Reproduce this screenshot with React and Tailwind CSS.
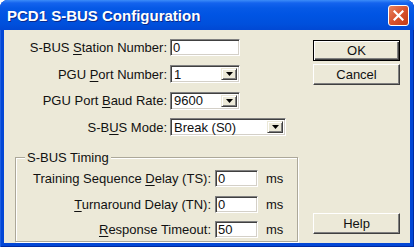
import React from "react";

const sunken =
  "bg-white border border-t-[#808080] border-l-[#808080] border-b-white border-r-white shadow-[inset_1px_1px_0_#404040,inset_-1px_-1px_0_#d4d0c8]";

function U({ children }) {
  return <span className="underline decoration-1 underline-offset-[2px]">{children}</span>;
}

function TextBox({ value, w }) {
  return (
    <div className={`${sunken} h-[17px] ${w} flex items-center pl-[2px] leading-none`}>
      {value}
    </div>
  );
}

function Select({ value, w }) {
  return (
    <div className={`${sunken} h-[18px] ${w} flex items-center p-[2px] pl-[3px] leading-none`}>
      <span className="flex-1">{value}</span>
      <div className="w-[16px] h-full bg-[#ECE9D8] border border-t-[#ECE9D8] border-l-[#ECE9D8] border-b-[#404040] border-r-[#404040] shadow-[inset_1px_1px_0_white,inset_-1px_-1px_0_#808080] flex items-center justify-center">
        <svg width="7" height="4" viewBox="0 0 7 4">
          <path d="M0 0H7L3.5 4Z" fill="black" />
        </svg>
      </div>
    </div>
  );
}

function Button({ children, def, className = "" }) {
  const cls = def
    ? "border border-black shadow-[inset_1px_1px_0_white,inset_-1px_-1px_0_#404040,inset_-2px_-2px_0_#808080]"
    : "border border-t-white border-l-white border-b-[#404040] border-r-[#404040] shadow-[inset_-1px_-1px_0_#808080]";
  return (
    <div className={`w-[87px] h-[21px] bg-[#ECE9D8] flex items-center justify-center leading-none ${cls} ${className}`}>
      {children}
    </div>
  );
}

function Row({ label, children, className = "" }) {
  return (
    <div className={`flex items-center ${className}`}>
      <div className="w-[163px] text-right">{label}</div>
      <div className="ml-[3px]">{children}</div>
    </div>
  );
}

function GRow({ label, value, className = "" }) {
  return (
    <div className={`flex items-center ${className}`}>
      <div className="w-[195px] text-right">{label}</div>
      <div className="ml-[4px]">
        <TextBox value={value} w="w-[43px]" />
      </div>
      <span className="ml-[8px]">ms</span>
    </div>
  );
}

export default function App() {
  return (
    <div className="w-[414px] h-[247px] bg-white font-['Liberation_Sans',Arial,sans-serif] text-[13px] text-[#111]">
      <div className="w-[414px] h-[247px] rounded-t-[8px] bg-[#0347D6] flex flex-col px-[4px] pb-[4px] shadow-[inset_1px_0_0_#1E5FE0,inset_-1px_0_0_#002AA0,inset_0_-1px_0_#002AA0]">
        <div className="h-[30px] -mx-[4px] rounded-t-[8px] bg-[linear-gradient(to_bottom,#3C8CF8_0px,#1463EE_3px,#0659E6_8px,#0054E3_15px,#0050DC_24px,#0148D4_30px)] flex items-center pl-[7px] pr-[5px]">
          <span className="flex-1 text-white font-bold text-[15px] leading-none [text-shadow:1px_1px_0_#0a2a8c]">
            PCD1 S-BUS Configuration
          </span>
          <div className="w-[21px] h-[21px] rounded-[3px] border border-white bg-[linear-gradient(to_bottom_right,#E8835E,#D8532E_50%,#C23A14)] flex items-center justify-center">
            <svg width="11" height="11" viewBox="0 0 11 11">
              <path d="M1.5 1.5L9.5 9.5M9.5 1.5L1.5 9.5" stroke="white" strokeWidth="2.2" strokeLinecap="square" />
            </svg>
          </div>
        </div>
        <div className="flex-1 bg-[#ECE9D8] flex">
          <div className="w-[300px] flex flex-col pt-[8px]">
            <Row label={<>S-BUS <U>S</U>tation Number:</>}>
              <TextBox value="0" w="w-[70px]" />
            </Row>
            <Row className="mt-[7px]" label={<>PGU <U>P</U>ort Number:</>}>
              <Select value="1" w="w-[70px]" />
            </Row>
            <Row className="mt-[7px]" label={<>PGU Port <U>B</U>aud Rate:</>}>
              <Select value="9600" w="w-[70px]" />
            </Row>
            <Row className="mt-[7px]" label={<>S-B<U>U</U>S Mode:</>}>
              <Select value="Break (S0)" w="w-[116px]" />
            </Row>
            <div className="relative ml-[11px] mt-[20px] w-[283px] h-[85px] border border-[#ACA899] shadow-[inset_1px_1px_0_white,1px_1px_0_white] pt-[11px]">
              <span className="absolute -top-[8px] left-[9px] bg-[#ECE9D8] px-[2px] leading-[15px]">
                S-BUS Timing
              </span>
              <GRow label={<>Training Sequence <U>D</U>elay (TS):</>} value="0" />
              <GRow className="mt-[6px]" label={<><U>T</U>urnaround Delay (TN):</>} value="0" />
              <GRow className="mt-[6px]" label={<><U>R</U>esponse Timeout:</>} value="50" />
            </div>
          </div>
          <div className="ml-[9px] flex flex-col pt-[10px] pb-[9px]">
            <Button def>OK</Button>
            <Button className="mt-[3px]">Cancel</Button>
            <Button className="mt-auto">Help</Button>
          </div>
        </div>
      </div>
    </div>
  );
}
